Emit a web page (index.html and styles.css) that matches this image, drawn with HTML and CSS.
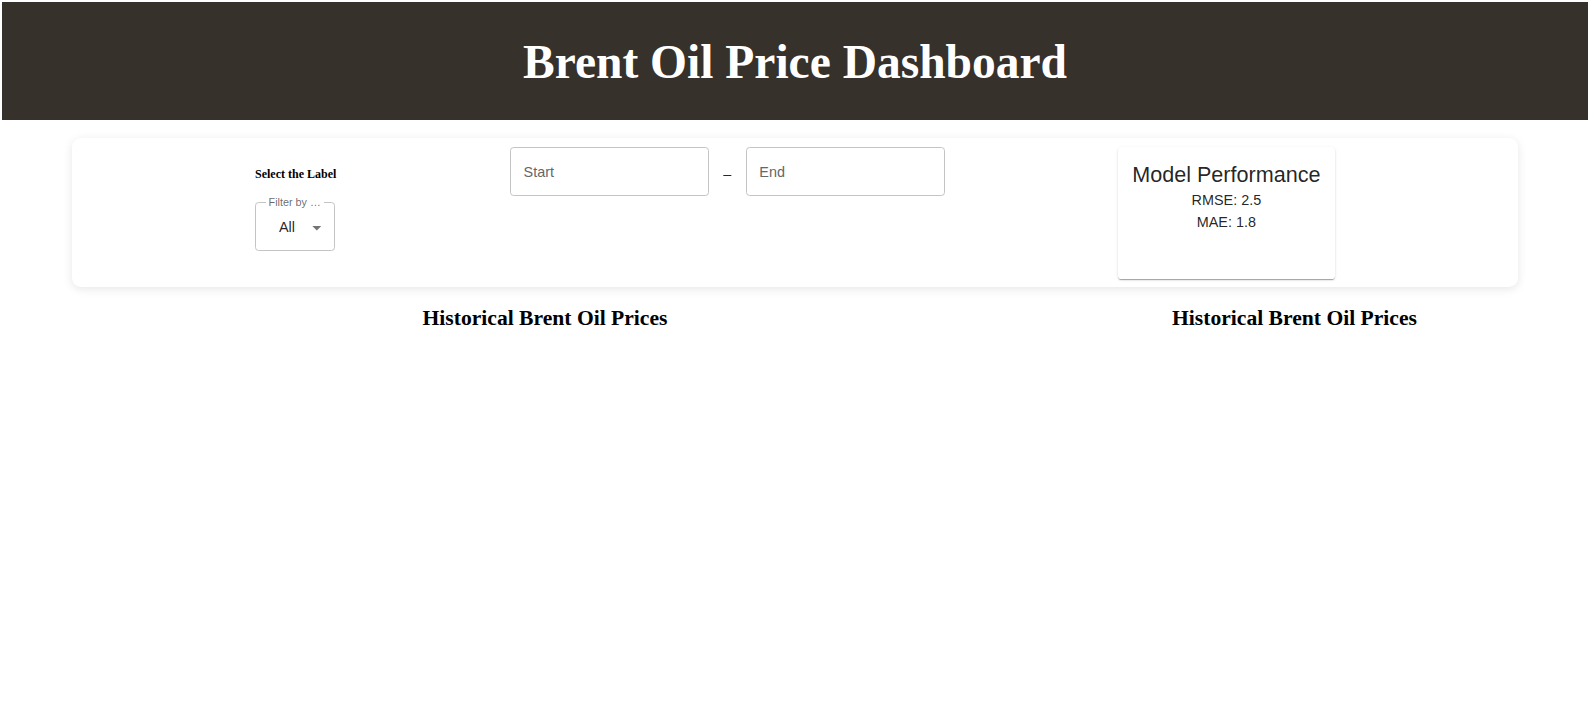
FILE: index.html
```html
<!DOCTYPE html>
<html lang="en">
<head>
<meta charset="utf-8">
<title>Brent Oil Price Dashboard</title>
<link rel="stylesheet" href="styles.css">
</head>
<body>
<header class="app-header">
  <h1 class="app-title">Brent Oil Price Dashboard</h1>
</header>

<section class="controls">
  <div class="filter-col">
    <h5 class="filter-title">Select the Label</h5>
    <div class="select">
      <span class="select-label">Filter by …</span>
      <span class="select-value">All</span>
      <svg class="select-arrow" viewBox="0 0 24 24" aria-hidden="true"><path d="M7 10l5 5 5-5z"/></svg>
    </div>
  </div>

  <div class="date-range">
    <div class="field">Start</div>
    <span class="dash">–</span>
    <div class="field">End</div>
  </div>

  <div class="metrics-card">
    <div class="metrics-title">Model Performance</div>
    <div class="metrics-line">RMSE: 2.5</div>
    <div class="metrics-line">MAE: 1.8</div>
  </div>
</section>

<section class="charts">
  <div class="chart">
    <h2 class="chart-title">Historical Brent Oil Prices</h2>
  </div>
  <div class="chart">
    <h2 class="chart-title">Historical Brent Oil Prices</h2>
  </div>
</section>
</body>
</html>
```

FILE: styles.css
```css
html, body {
  margin: 0;
  padding: 0;
  background: #ffffff;
}

body {
  font-family: "Liberation Serif", "Times New Roman", serif;
  color: #000;
}

.app-header {
  margin: 2px 2px 0;
  height: 118px;
  box-sizing: border-box;
  padding-top: 33px;
  background: #36312a;
}

.app-title {
  margin: 0;
  font-family: "Liberation Serif", "Times New Roman", serif;
  font-weight: bold;
  font-size: 47.5px;
  line-height: 55px;
  color: #ffffff;
  text-align: center;
}

.controls {
  margin: 18px 72px 0;
  padding: 9px 10px 8px;
  display: flex;
  justify-content: space-evenly;
  align-items: flex-start;
  background: #fff;
  border-radius: 9px;
  box-shadow: 0 2px 10px rgba(0, 0, 0, 0.1);
}

.filter-col {
  width: 82px;
  display: flex;
  flex-direction: column;
  align-items: flex-start;
}

.filter-title {
  margin: 21px 0 20.4px;
  font-family: "Liberation Serif", "Times New Roman", serif;
  font-weight: bold;
  font-size: 12px;
  line-height: 13.8px;
  white-space: nowrap;
  color: #000;
}

.select {
  position: relative;
  width: 80px;
  height: 49px;
  box-sizing: border-box;
  border: 1px solid #c4c4c4;
  border-radius: 3.6px;
  font-family: "Liberation Sans", Arial, sans-serif;
  display: flex;
  align-items: center;
  padding: 0 28.8px 0 12.6px;
}

.select-label {
  position: absolute;
  top: -7px;
  left: 9.6px;
  padding: 0 3px;
  white-space: nowrap;
  background: #fff;
  font-size: 10.8px;
  line-height: 12px;
  color: rgba(0, 0, 0, 0.6);
}

.select-value {
  flex: 1;
  text-align: center;
  font-size: 14.4px;
  color: rgba(0, 0, 0, 0.87);
}

.select-arrow {
  position: absolute;
  right: 6.3px;
  top: 13.7px;
  width: 21.6px;
  height: 21.6px;
  fill: rgba(0, 0, 0, 0.54);
}

.date-range {
  display: flex;
  align-items: center;
  font-family: "Liberation Sans", Arial, sans-serif;
}

.field {
  width: 199px;
  height: 49px;
  box-sizing: border-box;
  border: 1px solid #c4c4c4;
  border-radius: 3.6px;
  padding: 0 12.6px;
  display: flex;
  align-items: center;
  font-size: 14.4px;
  color: #666;
}

.dash {
  margin: 0 14.4px;
  font-size: 14.4px;
  color: rgba(0, 0, 0, 0.87);
  position: relative;
  top: 2px;
}

.metrics-card {
  height: 132px;
  box-sizing: border-box;
  padding: 14px 14.4px;
  border-radius: 3.6px;
  background: #fff;
  text-align: center;
  font-family: "Liberation Sans", Arial, sans-serif;
  color: rgba(0, 0, 0, 0.87);
  box-shadow: 0 2px 1px -1px rgba(0, 0, 0, 0.2), 0 1px 1px 0 rgba(0, 0, 0, 0.14), 0 1px 3px 0 rgba(0, 0, 0, 0.12);
}

.metrics-title {
  font-size: 21.6px;
  line-height: 28px;
}

.metrics-line {
  font-size: 14.4px;
  line-height: 22px;
}

.charts {
  display: grid;
  grid-template-columns: 1090px 409px;
}

.chart-title {
  margin: 18.9px 0 17.9px;
  font-family: "Liberation Serif", "Times New Roman", serif;
  font-weight: bold;
  font-size: 21.6px;
  text-align: center;
  color: #000;
}
```
